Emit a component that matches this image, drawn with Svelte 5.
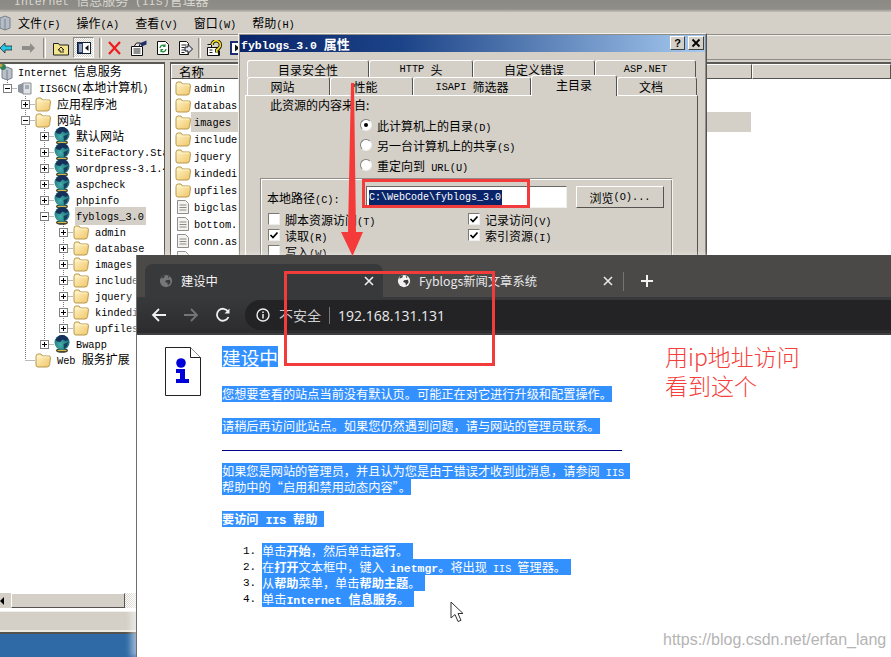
<script>
	// MMC tree: level decides the indent, exp is the +/- box
	const tree = [
		{ label: 'Internet 信息服务', level: 0, icon: 'root' },
		{ label: 'IIS6CN(本地计算机)', level: 1, exp: '-', icon: 'server' },
		{ label: '应用程序池', level: 2, exp: '+', icon: 'folder' },
		{ label: '网站', level: 2, exp: '-', icon: 'folder' },
		{ label: '默认网站', level: 3, exp: '+', icon: 'globe' },
		{ label: 'SiteFactory.Sta', level: 3, exp: '+', icon: 'globe' },
		{ label: 'wordpress-3.1.4', level: 3, exp: '+', icon: 'globe' },
		{ label: 'aspcheck', level: 3, exp: '+', icon: 'globe' },
		{ label: 'phpinfo', level: 3, exp: '+', icon: 'globe' },
		{ label: 'fyblogs_3.0', level: 3, exp: '-', icon: 'globe', selected: true },
		{ label: 'admin', level: 4, exp: '+', icon: 'folder' },
		{ label: 'database', level: 4, exp: '+', icon: 'folder' },
		{ label: 'images', level: 4, exp: '+', icon: 'folder' },
		{ label: 'include', level: 4, exp: '+', icon: 'folder' },
		{ label: 'jquery', level: 4, exp: '+', icon: 'folder' },
		{ label: 'kindedi', level: 4, exp: '+', icon: 'folder' },
		{ label: 'upfiles', level: 4, exp: '+', icon: 'folder' },
		{ label: 'Bwapp', level: 3, exp: '+', icon: 'globe' },
		{ label: 'Web 服务扩展', level: 2, icon: 'folder' },
	];
	const indent = [0, 3, 21, 40, 59];

	const files = [
		{ name: 'admin', icon: 'folder' },
		{ name: 'databas', icon: 'folder' },
		{ name: 'images', icon: 'folder', selected: true },
		{ name: 'include', icon: 'folder' },
		{ name: 'jquery', icon: 'folder' },
		{ name: 'kindedi', icon: 'folder' },
		{ name: 'upfiles', icon: 'folder' },
		{ name: 'bigclas', icon: 'file' },
		{ name: 'bottom.', icon: 'file' },
		{ name: 'conn.as', icon: 'file' },
		{ name: 'css.as', icon: 'file' },
	];

	const menus = ['文件(F)', '操作(A)', '查看(V)', '窗口(W)', '帮助(H)'];

	const steps = [
		[['单击'], ['开始', 1], ['，然后单击'], ['运行', 1], ['。']],
		[['在'], ['打开', 1], ['文本框中，键入 '], ['inetmgr', 1], ['。将出现 IIS 管理器。']],
		[['从'], ['帮助', 1], ['菜单，单击'], ['帮助主题', 1], ['。']],
		[['单击'], ['Internet 信息服务', 1], ['。']],
	];

	// SimSun-style half width latin: split so ascii runs get the mono face
	const split = (s) => s.match(/[\x00-\x7f]+|[^\x00-\x7f]+/g);
	const isAscii = (s) => s.charCodeAt(0) < 128;
	const y = (i) => 72 + i * 16;
	const cx = (level) => indent[level] + 4.5;
</script>

{#snippet txt(s)}{#each split(s) as p}{#if isAscii(p)}<span class="a">{p}</span>{:else}{p}{/if}{/each}{/snippet}

{#snippet icon(name)}
	{#if name === 'folder'}
		<svg class="ic" viewBox="0 0 16 16">
			<path d="M1 4.500V13q0 2 2 2h9q2.200 0 2.600-2.500L15.500 5.500q0-1.500-1.500-1.500H7.500L6 2H3Q1 2 1 4.500Z" fill="url(#fold)" stroke="#b7994e" />
			<path d="M2 5h12" stroke="#fff4c8" />
		</svg>
	{:else if name === 'globe'}
		<svg class="ic globe" viewBox="0 0 16 18">
			<ellipse cx="8" cy="15.500" rx="6" ry="2.300" fill="#3a3a2a" />
			<path d="M3.500 15.500h9" stroke="#d8b848" stroke-width="1.200" />
			<circle cx="8" cy="7.500" r="7.500" fill="url(#globe)" />
			<path d="M1.500 5Q4 0 8 0q4.500 0 6.500 4.500L11.500 6 8.500 4.500 6 7 3.500 6.500Z" fill="#17305a" />
			<path d="M9.500 9l4.500-1.500-1 4-3 2.500Z" fill="#17405f" />
		</svg>
	{:else if name === 'file'}
		<svg class="ic" viewBox="0 0 16 16">
			<path d="M2.500 1.500h8l3 3v10h-11Z" fill="#f4f3ee" stroke="#8f8f8f" />
			<path d="M4.500 6h7M4.500 8.500h7M4.500 11h7" stroke="#8a8a8a" />
		</svg>
	{:else if name === 'server'}
		<svg class="ic" viewBox="0 0 16 16">
			<path d="M1 5l5-2v11l-5-2Z" fill="#8d96a0" />
			<path d="M6 3h8v11H6Z" fill="#dfe3e6" stroke="#8a8f94" />
			<path d="M8 6h4M8 8h4" stroke="#6b7580" />
		</svg>
	{:else}
		<svg class="ic small" viewBox="0 0 14 16">
			<path d="M2 5l5-2 5 2v9l-5 2-5-2Z" fill="#b9c0c8" stroke="#78808a" />
			<path d="M7 6v10" stroke="#78808a" />
			<circle cx="3" cy="3" r="3" fill="#2f7f5f" />
			<circle cx="1" cy="1.500" r="1.500" fill="#c8a030" />
		</svg>
	{/if}
{/snippet}

{#snippet tabGlobe(color)}
	<svg class="tab-globe" viewBox="0 0 16 16">
		<circle cx="8" cy="8" r="7" fill={color} />
		<path d="M2.500 5.500 6 4l1-2.500L3.800 2.500ZM8 7l4.500-.5.8 3-3 3.500-.8-3L7 9ZM10 1.800l2 2-1.500.8Z" fill="#3a3a3c" />
	</svg>
{/snippet}

{#snippet closeX(color)}
	<svg class="tab-x" viewBox="0 0 10 10">
		<path d="M1 1l8 8M9 1l-8 8" stroke={color} stroke-width="1.600" />
	</svg>
{/snippet}

{#snippet check(label, on)}
	<div class="check">
		<span class="box">
			{#if on}
				<svg viewBox="0 0 10 10"><path d="M1.500 5l2.500 2.500 4.500-5" fill="none" stroke="#000" stroke-width="1.700" /></svg>
			{/if}
		</span>
		<span>{@render txt(label)}</span>
	</div>
{/snippet}

{#snippet radio(label, on)}
	<div class="radio">
		<span class="dot" class:on></span>
		<span>{@render txt(label)}</span>
	</div>
{/snippet}

<svg class="defs" aria-hidden="true">
	<defs>
		<linearGradient id="fold" x1="0" y1="0" x2="1" y2="1">
			<stop offset="0" stop-color="#fff6cc" />
			<stop offset="1" stop-color="#f0c566" />
		</linearGradient>
		<radialGradient id="globe" cx="0.400" cy="0.650" r="0.750">
			<stop offset="0" stop-color="#47b0a8" />
			<stop offset="1" stop-color="#0c5a70" />
		</radialGradient>
	</defs>
</svg>

<div class="screen">
	<!-- IIS manager window -->
	<div class="mmc">
		<div class="mmc-title">{@render txt('Internet 信息服务 (IIS)管理器')}</div>
		<div class="menubar">
			<svg class="menu-icon" viewBox="0 0 11 16">
				<path d="M0 3l5-2 5 2v10l-5 2-5-2Z" fill="#b4bcc6" stroke="#77808c" />
				<path d="M5 4v11" stroke="#77808c" />
			</svg>
			{#each menus as m}
				<span class="menu-item">{@render txt(m)}</span>
			{/each}
		</div>
		<div class="tools">
			<div class="tool-group">
				<svg class="t12" viewBox="0 0 12 14"><path d="M0 7l5-5v3h7v4H5v3Z" fill="#27c6e6" stroke="#1a1a1a" stroke-width=".7" /></svg>
				<svg class="t13" viewBox="0 0 13 14"><path d="M13 7L8 2v3H0v4h8v3Z" fill="#8f8d88" /></svg>
			</div>
			<span class="sep first"></span>
			<div class="tool-group near">
				<svg class="t16" viewBox="0 0 16 16">
					<path d="M.5 3.500h5l1 1.500h9v10H.5Z" fill="#f4e58a" stroke="#222" />
					<path d="M8 7L5 10h2v2h4M8 7l3 3H9" fill="none" stroke="#222" />
				</svg>
				<span class="pressed">
					<svg class="t14" viewBox="0 0 14 14">
						<rect x=".5" y="1.500" width="13" height="11" fill="#fff" stroke="#10203c" />
						<rect x="1" y="2" width="5" height="10" fill="#27406f" />
						<path d="M2 4h3M2 6h3M2 8h3M2 10h3" stroke="#fff" />
						<path d="M11.500 4L8 7l3.500 3Z" fill="#111" />
					</svg>
				</span>
			</div>
			<span class="sep"></span>
			<div class="tool-group">
				<svg class="t13" viewBox="0 0 13 14"><path d="M1 1l11 12M12 1L1 13" stroke="#ee1c1c" stroke-width="2.200" /></svg>
				<svg class="t16" viewBox="0 0 16 16">
					<path d="M.5 6.500h11v9H.5Z" fill="#fff" stroke="#111" />
					<path d="M2.500 9h7M2.500 11h7M2.500 13h7" stroke="#222" />
					<path d="M3 6.500l2.500-3.500h4l-1.500 3.500Z" fill="#e8e8e8" stroke="#111" />
					<path d="M9.500 3L15.500 .5v4l-5 2Z" fill="#1b2f6e" />
				</svg>
				<svg class="t12" viewBox="0 0 12 16">
					<path d="M.5 1.500h8l3 3v10H.5Z" fill="#fff" stroke="#111" />
					<path d="M3 8a3 3 0 0 1 5-2M9 9a3 3 0 0 1-5 2" fill="none" stroke="#1e8a3a" stroke-width="1.300" />
					<path d="M8.500 3.500v3.500H5.500ZM3.500 12.500V9h3Z" fill="#1e8a3a" />
				</svg>
				<svg class="t14" viewBox="0 0 14 16">
					<path d="M.5 1.500h7l2 2v11H.5Z" fill="#fff" stroke="#111" />
					<path d="M2.500 5h5M2.500 7.500h3M2.500 10h3M2.500 12.500h3" stroke="#222" />
					<path d="M6 7h3V4.500L13.500 9 9 13.500V11H6Z" fill="#dfe5f0" stroke="#111" />
				</svg>
			</div>
			<span class="sep"></span>
			<div class="tool-group wide">
				<svg class="t16" viewBox="0 0 16 16">
					<path d="M.5 4.500h4v11h8v-5" fill="#fff" stroke="#111" />
					<path d="M.5 7.500h11v8H.5Z" fill="#fff" stroke="#111" />
					<path d="M2.500 10h3M2.500 12.500h3" stroke="#222" />
					<path d="M5 5a4.200 4.200 0 1 1 6.500 3.500L9.800 10v2.500" fill="none" stroke="#111" stroke-width="3.400" />
					<path d="M5 5a4.200 4.200 0 1 1 6.500 3.500L9.800 10v2.500" fill="none" stroke="#f4e020" stroke-width="1.700" />
				</svg>
				<svg class="t14" viewBox="0 0 14 16">
					<rect x="1" y="2" width="12" height="12" fill="#fff" stroke="#1b2f6e" stroke-width="2" />
					<path d="M5 4.500L9.500 8 5 11.500Z" fill="#111" />
				</svg>
			</div>
		</div>
		<div class="panes">
			<div class="tree-pane">
				<div class="tree">
					<svg class="guides" viewBox="0 64 165 400">
						<path d="M7.500 80V88M25.500 96V360M44.500 128V344M63.500 224V328" class="guide" />
						{#each tree as r, i}
							{#if r.level > 0}
								<path d="M{cx(r.level)} {y(i) + 0.5}H{indent[r.level] + 14}" class="guide" />
							{/if}
						{/each}
					</svg>
					{#each tree as r}
						<div class="row" class:top={r.level === 0} style:padding-left="{indent[r.level]}px">
							{#if r.level > 0}
								<span class="exp" class:blank={!r.exp}>{#if r.exp}<i></i>{#if r.exp === '+'}<u></u>{/if}{/if}</span>
							{/if}
							{@render icon(r.icon)}
							<span class="label" class:selected={r.selected}>{@render txt(r.label)}</span>
						</div>
					{/each}
				</div>
				<div class="hscroll">
					<span class="sb-btn"></span>
					<span class="sb-thumb"></span>
					<span class="sb-track"></span>
				</div>
			</div>
			<div class="list-pane">
				<div class="list-head">
					<span class="col name">名称</span>
					<span class="col rest"></span>
				</div>
				{#each files as f}
					<div class="file">
						{@render icon(f.icon)}
						<span class="file-name" class:selected={f.selected}><span class="a">{f.name}</span></span>
					</div>
				{/each}
			</div>
		</div>
		<div class="status"></div>
	</div>

	<!-- properties dialog -->
	<div class="dialog">
		<div class="dlg-title">
			<span class="dlg-name">{@render txt('fyblogs_3.0 属性')}</span>
			<span class="cap-btn">?</span>
			<span class="cap-btn x">
				<svg viewBox="0 0 10 10"><path d="M1.500 1.500l7 7M8.500 1.500l-7 7" stroke="#000" stroke-width="1.800" /></svg>
			</span>
		</div>
		<div class="tabs back">
			<span class="tab w121">目录安全性</span>
			<span class="tab w103">{@render txt('HTTP 头')}</span>
			<span class="tab w120">自定义错误</span>
			<span class="tab w101">{@render txt('ASP.NET')}</span>
		</div>
		<div class="tabs front">
			<span class="tab w82 off">网站</span>
			<span class="tab w82 off">性能</span>
			<span class="tab w118">{@render txt('ISAPI 筛选器')}</span>
			<span class="tab w85 active">主目录</span>
			<span class="tab w80 off">文档</span>
		</div>
		<div class="page">
			<div class="src-title">此资源的内容来自:</div>
			<div class="radios">
				{@render radio('此计算机上的目录(D)', true)}
				{@render radio('另一台计算机上的共享(S)', false)}
				{@render radio('重定向到 URL(U)', false)}
			</div>
			<div class="group">
				<div class="path-row">
					<span class="path-label">{@render txt('本地路径(C):')}</span>
					<span class="path-input"><span class="path-sel">C:\WebCode\fyblogs_3.0</span></span>
					<span class="browse">{@render txt('浏览(O)...')}</span>
				</div>
				<div class="checks">
					<div class="check-col">
						{@render check('脚本资源访问(T)', false)}
						{@render check('读取(R)', true)}
						{@render check('写入(W)', false)}
					</div>
					<div class="check-col">
						{@render check('记录访问(V)', true)}
						{@render check('索引资源(I)', true)}
					</div>
				</div>
			</div>
		</div>
	</div>

	<!-- chrome window -->
	<div class="browser">
		<div class="strip">
			<div class="btab active">
				{@render tabGlobe('#77777a')}
				<span class="btab-text">建设中</span>
				{@render closeX('#f0f0f0')}
			</div>
			<div class="btab">
				{@render tabGlobe('#f2f2f2')}
				<span class="btab-text">Fyblogs新闻文章系统</span>
				{@render closeX('#e8e8e8')}
			</div>
			<span class="strip-sep"></span>
			<svg class="plus" viewBox="0 0 12 12"><path d="M6 0v12M0 6h12" stroke="#f2f2f2" stroke-width="2" /></svg>
		</div>
		<div class="nav">
			<span class="nav-btn">
				<svg viewBox="0 0 16 16"><path d="M15 8H2M8 2L2 8l6 6" fill="none" stroke="#f0f0f0" stroke-width="1.800" /></svg>
			</span>
			<span class="nav-btn">
				<svg viewBox="0 0 16 16"><path d="M1 8h13M8 2l6 6-6 6" fill="none" stroke="#757577" stroke-width="1.800" /></svg>
			</span>
			<span class="nav-btn">
				<svg viewBox="0 0 16 16"><path d="M13.500 10a6 6 0 1 1-.5-5.500" fill="none" stroke="#f0f0f0" stroke-width="1.800" /><path d="M14.500 1.500v5h-5Z" fill="#f0f0f0" /></svg>
			</span>
			<div class="omnibox">
				<svg class="info" viewBox="0 0 14 14">
					<circle cx="7" cy="7" r="6" fill="none" stroke="#eee" stroke-width="1.400" />
					<path d="M7 6v4.500M7 3.500v1.400" stroke="#eee" stroke-width="1.500" />
				</svg>
				<span class="insecure">不安全</span>
				<span class="omni-sep"></span>
				<span class="url">192.168.131.131</span>
			</div>
		</div>
		<div class="content">
			<svg class="doc-icon" viewBox="0 0 36 49">
				<path d="M.5.5h25l10 10v38H.5Z" fill="#fff" stroke="#222" />
				<path d="M25.500.5v10h10" fill="#fff" stroke="#222" />
				<circle cx="16" cy="16" r="4.800" fill="#0000d8" />
				<path d="M11 22h9v10h4v4H11v-4h4v-6h-4Z" fill="#0000d8" />
			</svg>
			<div class="copy">
				<h1><span class="sel big">建设中 </span></h1>
				<p><span class="sel">您想要查看的站点当前没有默认页。可能正在对它进行升级和配置操作。</span></p>
				<p><span class="sel">请稍后再访问此站点。如果您仍然遇到问题，请与网站的管理员联系。</span></p>
				<hr />
				<p class="tight">
					<span class="sel line">{@render txt('如果您是网站的管理员，并且认为您是由于错误才收到此消息，请参阅 IIS ')}</span>
					<span class="sel line">帮助中的“启用和禁用动态内容”。</span>
				</p>
				<p><span class="sel"><b>{@render txt('要访问 IIS 帮助 ')}</b></span></p>
				<ol>
					{#each steps as step, i}
						<li>
							<span class="num a">{i + 1}.</span>
							<span class="sel">{#each step as [t, bold]}{#if bold}<b>{@render txt(t)}</b>{:else}{@render txt(t)}{/if}{/each}</span>
						</li>
					{/each}
				</ol>
			</div>
		</div>
	</div>

	<!-- red annotations drawn over the screenshots -->
	<svg class="arrow" viewBox="0 0 30 180">
		<path d="M12 0h3l2 149h7L13.500 173 2 149h7Z" fill="#f53a3a" />
	</svg>
	<div class="mark mark-path"></div>
	<div class="mark mark-addr"></div>
	<div class="note">用ip地址访问<br />看到这个</div>
	<svg class="cursor" viewBox="0 0 14 22">
		<path d="M1 1v16l4-3.500 3 7 3-1.200-3-6.800h5Z" fill="#fff" stroke="#333" />
	</svg>
	<div class="watermark">https://blog.csdn.net/erfan_lang</div>
</div>

<style>
	:global(body) {
		margin: 0;
		background: #2f6aa6;
	}

	.defs {
		position: absolute;
		width: 0;
		height: 0;
	}

	.screen {
		position: relative;
		width: 891px;
		height: 657px;
		overflow: hidden;
		background: #2f6aa6;
		font-family: "Noto Sans CJK SC", sans-serif;
		font-size: 12px;
		color: #000;
	}

	.a {
		font-family: "Liberation Mono", monospace;
		font-size: 10.3px;
		white-space: pre;
	}

	/* ---- MMC window ---- */
	.mmc {
		position: absolute;
		left: 0;
		top: 0;
		width: 891px;
		height: 634px;
		display: flex;
		flex-direction: column;
		background: #d4d0c8;
		border-bottom: 2px solid #55534f;
		box-sizing: border-box;
	}

	.mmc-title {
		height: 12px;
		flex: none;
		padding-left: 14px;
		font-size: 13px;
		line-height: 0;
		background: linear-gradient(180deg, #8c8a84 0%, #8f8d87 75%, #c4c1b9 100%);
		color: #d8d6d0;
		white-space: pre;
		overflow: hidden;
	}

	.mmc-title .a {
		font-size: 11.500px;
	}

	.menubar {
		height: 23px;
		flex: none;
		display: flex;
		align-items: center;
		gap: 16px;
		padding-bottom: 1px;
		border-bottom: 1px solid #8f8d87;
		box-sizing: border-box;
	}

	.menu-icon {
		width: 11px;
		height: 16px;
		margin-right: -9px;
	}

	.tools {
		height: 25px;
		flex: none;
		display: flex;
		align-items: center;
		border-top: 1px solid #f2f0ea;
		border-bottom: 1px solid #8f8d87;
		box-sizing: border-box;
	}

	.tool-group {
		display: flex;
		align-items: center;
		gap: 10px;
	}

	.tool-group.near {
		gap: 4px;
	}

	.tool-group.wide {
		gap: 7px;
	}

	.sep {
		width: 1px;
		height: 20px;
		margin: 0 6px 0 5px;
		border-left: 1px solid #8f8d87;
		border-right: 1px solid #fff;
	}

	.sep.first {
		margin: 0 7px 0 8px;
	}

	.t12 { width: 12px; height: 16px; }
	.t13 { width: 13px; height: 14px; }
	.t14 { width: 14px; height: 16px; }
	.t16 { width: 16px; height: 16px; }

	.pressed {
		width: 21px;
		height: 21px;
		display: flex;
		align-items: center;
		justify-content: center;
		box-sizing: border-box;
		border: 1px solid;
		border-color: #8f8d87 #fff #fff #8f8d87;
		background: repeating-conic-gradient(#fff 0 25%, #d4d0c8 0 50%) 0 0 / 2px 2px;
	}

	.panes {
		flex: 1;
		display: flex;
		gap: 5px;
		min-height: 0;
		margin-top: 2px;
	}

	.tree-pane {
		width: 165px;
		flex: none;
		display: flex;
		flex-direction: column;
		background: #fff;
		border-top: 2px solid #5c5a56;
		border-right: 1px solid #5c5a56;
		border-bottom: 1px solid #fff;
		box-sizing: border-box;
	}

	.tree {
		position: relative;
		flex: 1;
		overflow: hidden;
	}

	.guides {
		position: absolute;
		left: 0;
		top: 0;
		width: 165px;
		height: 400px;
	}

	.guide {
		fill: none;
		stroke: #777;
		stroke-dasharray: 1 1;
	}

	.row {
		position: relative;
		display: flex;
		align-items: center;
		height: 16px;
	}

	.exp {
		position: relative;
		width: 9px;
		height: 9px;
		flex: none;
		margin-right: 5px;
		box-sizing: border-box;
		border: 1px solid #808080;
		background: #fff;
	}

	.exp.blank {
		visibility: hidden;
	}

	.exp i {
		position: absolute;
		left: 1px;
		top: 3px;
		width: 5px;
		height: 1px;
		background: #000;
	}

	.exp u {
		position: absolute;
		left: 3px;
		top: 1px;
		width: 1px;
		height: 5px;
		background: #000;
	}

	.ic {
		width: 16px;
		height: 16px;
		flex: none;
	}

	.ic.small {
		width: 14px;
	}

	.ic.globe {
		height: 18px;
		margin: -1px 0;
		overflow: visible;
	}

	.label {
		margin-left: 5px;
		padding: 0 2px 0 1px;
		line-height: 16px;
		white-space: pre;
	}

	.row.top .label {
		margin-left: 3px;
	}

	.selected {
		background: #d4d0c8;
	}

	.hscroll {
		height: 15px;
		flex: none;
		display: flex;
		margin-bottom: 2px;
		background: #d4d0c8;
	}

	.sb-btn {
		width: 0;
		height: 0;
		margin: 4px 7px 0 0;
		border-top: 4px solid transparent;
		border-bottom: 4px solid transparent;
		border-right: 4px solid #000;
	}

	.sb-thumb {
		width: 114px;
		box-sizing: border-box;
		border: 1px solid;
		border-color: #fff #55534f #55534f #fff;
	}

	.sb-track {
		flex: 1;
		background: repeating-conic-gradient(#fff 0 25%, #d4d0c8 0 50%) 0 0 / 2px 2px;
	}

	.list-pane {
		flex: 1;
		min-width: 0;
		background: #fff;
		border-top: 2px solid #5c5a56;
		border-left: 1px solid #5c5a56;
	}

	.list-head {
		display: flex;
		height: 15px;
	}

	.col {
		display: flex;
		align-items: center;
		padding-left: 7px;
		box-sizing: border-box;
		background: #d4d0c8;
		border: 1px solid;
		border-color: #fff #55534f #55534f #fff;
	}

	.col.name {
		width: 581px;
		flex: none;
		font-size: 12.500px;
	}

	.col.rest {
		flex: 1;
	}

	.file {
		display: flex;
		align-items: center;
		height: 17px;
		padding-left: 4px;
	}

	.file-name {
		width: 560px;
		padding-left: 3px;
		line-height: 17px;
		box-sizing: border-box;
	}

	.status {
		height: 21px;
		flex: none;
		border-top: 1px solid #f2f0ea;
		border-bottom: 2px solid #ece9e1;
		box-sizing: border-box;
	}

	/* ---- properties dialog ---- */
	.dialog {
		position: absolute;
		left: 238px;
		top: 33px;
		width: 469px;
		height: 260px;
		box-sizing: border-box;
		background: #d4d0c8;
		border: 1px solid;
		border-color: #f2f0ea #55534f #55534f #f2f0ea;
		outline: 1px solid #8f8d87;
		outline-offset: -2px;
	}

	.dlg-title {
		height: 18px;
		display: flex;
		align-items: center;
		gap: 3px;
		padding-right: 2px;
		background: linear-gradient(90deg, #0a246a 0%, #1d4488 35%, #a6caf0 100%);
		color: #fff;
		font-size: 13px;
		font-weight: 700;
	}

	.dlg-name {
		flex: 1;
		padding-left: 2px;
		white-space: pre;
	}

	.dlg-name :global(.a) {
		font-size: 11.500px;
	}

	.cap-btn {
		width: 15px;
		height: 14px;
		display: flex;
		align-items: center;
		justify-content: center;
		box-sizing: border-box;
		background: #d4d0c8;
		color: #000;
		font-family: "Liberation Sans", sans-serif;
		font-size: 11px;
		font-weight: 700;
		border: 1px solid;
		border-color: #fff #404040 #404040 #fff;
	}

	.cap-btn.x {
		width: 16px;
	}

	.cap-btn svg {
		width: 10px;
		height: 10px;
	}

	.tabs {
		display: flex;
		margin-left: 8px;
	}

	.tabs.back {
		height: 17px;
		margin-top: 8px;
	}

	.tabs.front {
		height: 18px;
	}

	.tab {
		display: flex;
		align-items: center;
		justify-content: center;
		box-sizing: border-box;
		border: 1px solid;
		border-bottom: 0;
		border-color: #fff #55534f transparent #fff;
		border-radius: 3px 3px 0 0;
		white-space: pre;
	}

	/* these labels sit left of centre in the original */
	.tab.off {
		padding-right: 12px;
	}

	.tab.active {
		position: relative;
		z-index: 1;
		height: 21px;
		margin-top: -2px;
		padding-bottom: 3px;
		background: #d4d0c8;
	}

	.w80 { width: 80px; }
	.w82 { width: 83px; }
	.w85 { width: 86px; }
	.w101 { width: 101px; }
	.w103 { width: 104px; }
	.w118 { width: 118px; }
	.w120 { width: 122px; }
	.w121 { width: 122px; }

	.page {
		width: 453px;
		height: 210px;
		margin-left: 6px;
		padding-top: 1px;
		box-sizing: border-box;
		border: 1px solid;
		border-color: #fff #55534f #55534f #fff;
	}

	.src-title {
		height: 16px;
		line-height: 16px;
		margin-left: 24px;
	}

	.radios {
		margin: 2px 0 3px 114px;
	}

	.radio {
		display: flex;
		align-items: center;
		gap: 5px;
		height: 20px;
		white-space: pre;
	}

	.dot {
		position: relative;
		width: 12px;
		height: 12px;
		box-sizing: border-box;
		border-radius: 50%;
		background: #fff;
		border: 1px solid;
		border-color: #808080 #eee #eee #808080;
	}

	.dot.on::after {
		content: "";
		position: absolute;
		left: 3px;
		top: 3px;
		width: 4px;
		height: 4px;
		border-radius: 50%;
		background: #000;
	}

	.group {
		width: 413px;
		height: 110px;
		margin-left: 14px;
		padding: 7px 0 0 6px;
		box-sizing: border-box;
		border: 1px solid;
		border-color: #8f8d87 #f6f4ee #f6f4ee #8f8d87;
		box-shadow: 1px 1px 0 #fff inset, -1px 0 0 #8f8d87 inset;
	}

	.path-row {
		display: flex;
		align-items: center;
		height: 22px;
	}

	.path-label {
		width: 99px;
		flex: none;
		white-space: pre;
	}

	.path-input {
		width: 201px;
		height: 22px;
		flex: none;
		display: flex;
		align-items: center;
		padding-left: 2px;
		box-sizing: border-box;
		background: #fff;
		border: 1px solid;
		border-color: #6a6862 #f2f0ea #f2f0ea #6a6862;
	}

	.path-sel {
		height: 15px;
		line-height: 15px;
		padding-right: 1px;
		background: #0a246a;
		color: #fff;
		font-family: "Liberation Mono", monospace;
		font-size: 10px;
		white-space: pre;
	}

	.browse {
		width: 88px;
		height: 22px;
		margin-left: 9px;
		display: flex;
		align-items: center;
		justify-content: center;
		box-sizing: border-box;
		white-space: pre;
		border: 1px solid;
		border-color: #fff #55534f #55534f #fff;
	}

	.checks {
		display: flex;
		margin-top: 3px;
	}

	.check-col {
		width: 200px;
	}

	.check {
		display: flex;
		align-items: center;
		gap: 5px;
		height: 16px;
		padding-left: 1px;
		white-space: pre;
	}

	.box {
		width: 12px;
		height: 12px;
		box-sizing: border-box;
		background: #fff;
		border: 1px solid;
		border-color: #7a7872 #eee #eee #7a7872;
	}

	.box svg {
		display: block;
		width: 10px;
		height: 10px;
	}

	/* ---- browser ---- */
	.browser {
		position: absolute;
		left: 136px;
		top: 255px;
		width: 755px;
		height: 402px;
		display: flex;
		flex-direction: column;
		background: #fff;
		border-left: 1px solid #6f6f6f;
		box-sizing: border-box;
		box-shadow: -5px 0 6px rgba(255, 255, 255, 0.5);
		font-family: "Open Sans", "Noto Sans CJK SC", sans-serif;
	}

	.strip {
		height: 42px;
		flex: none;
		display: flex;
		align-items: flex-end;
		padding-left: 8px;
		background: #4a4948;
	}

	.btab {
		display: flex;
		align-items: center;
		height: 33px;
		padding: 0 10px 0 14px;
		box-sizing: border-box;
		width: 240px;
		color: #e8e8e8;
		font-family: "Noto Sans CJK SC", sans-serif;
		font-size: 12.300px;
	}

	.btab.active {
		width: 238px;
		padding-right: 9px;
		background: #38393b;
		border-radius: 8px 8px 0 0;
		color: #f4f4f4;
	}

	.tab-globe {
		width: 14px;
		height: 14px;
		flex: none;
	}

	.btab-text {
		flex: 1;
		margin-left: 8px;
	}

	.tab-x {
		width: 10px;
		height: 10px;
		flex: none;
	}

	.strip-sep {
		width: 1px;
		height: 19px;
		margin-bottom: 6px;
		background: #757472;
	}

	.plus {
		width: 12px;
		height: 12px;
		margin: 0 0 10px 17px;
	}

	.nav {
		height: 38px;
		flex: none;
		display: flex;
		align-items: center;
		padding-left: 6px;
		background: linear-gradient(180deg, #38393b 0%, #2c2c2e 100%);
		border-bottom: 2px solid #3f3f41;
		box-sizing: border-box;
	}

	.nav-btn {
		width: 32px;
		height: 28px;
		flex: none;
		display: flex;
		align-items: center;
		justify-content: center;
	}

	.nav-btn svg {
		width: 16px;
		height: 16px;
	}

	.omnibox {
		flex: 1;
		height: 30px;
		display: flex;
		align-items: center;
		margin-left: 6px;
		padding-left: 11px;
		background: #232325;
		border-radius: 15px 0 0 15px;
	}

	.info {
		width: 14px;
		height: 14px;
	}

	.insecure {
		margin-left: 9px;
		color: #d0d0d0;
		font-family: "Noto Sans CJK SC", sans-serif;
		font-size: 14px;
	}

	.omni-sep {
		width: 1px;
		height: 17px;
		margin: 0 8px;
		background: #777;
	}

	.url {
		color: #ececec;
		font-family: "Open Sans", sans-serif;
		font-size: 14px;
	}

	.content {
		flex: 1;
		display: flex;
		align-items: flex-start;
		gap: 21px;
		padding: 11px 0 0 28px;
		font-family: "Noto Sans CJK SC", sans-serif;
		font-size: 12.200px;
	}

	.doc-icon {
		width: 36px;
		height: 49px;
		flex: none;
		margin-top: 1px;
	}

	.copy {
		width: 400px;
	}

	.copy h1 {
		margin: 0 0 19px;
		height: 21px;
		font-size: 18.700px;
		font-weight: 400;
		line-height: 21px;
	}

	.copy p {
		margin: 0 0 16px;
		line-height: 16px;
	}

	.sel {
		display: inline-block;
		height: 16px;
		line-height: 16px;
		background: #3390ff;
		color: #fff;
		white-space: pre;
	}

	.sel.big {
		height: 21px;
		line-height: 21px;
	}

	.sel.line {
		display: block;
		width: fit-content;
	}

	.sel :global(.a) {
		font-size: 10.100px;
	}

	.sel b :global(.a) {
		font-size: 11.500px;
	}

	.copy hr {
		height: 1px;
		margin: 0 0 12px;
		border: 0;
		background: #00008b;
	}

	.copy ol {
		margin: 0;
		padding: 0;
		list-style: none;
	}

	.copy li {
		display: flex;
		height: 16px;
		line-height: 16px;
	}

	.copy li .sel {
		padding-right: 5px;
	}

	.num {
		width: 40px;
		padding-left: 21px;
		box-sizing: border-box;
		font-size: 11px;
	}

	/* ---- annotations ---- */
	.arrow {
		position: absolute;
		left: 339px;
		top: 83px;
		width: 30px;
		height: 180px;
	}

	.mark {
		position: absolute;
		box-sizing: border-box;
		border: 3px solid #f23b3b;
	}

	.mark-path {
		left: 362px;
		top: 179px;
		width: 168px;
		height: 29px;
	}

	.mark-addr {
		left: 284px;
		top: 271px;
		width: 211px;
		height: 95px;
	}

	.note {
		position: absolute;
		left: 665px;
		top: 342px;
		color: #f5403c;
		font-family: "Noto Sans CJK SC", sans-serif;
		font-size: 23px;
		font-weight: 300;
		line-height: 29px;
	}

	.cursor {
		position: absolute;
		left: 450px;
		top: 601px;
		width: 14px;
		height: 22px;
	}

	.watermark {
		position: absolute;
		left: 663px;
		top: 630px;
		color: #b4b4b4;
		font-family: "Liberation Sans", sans-serif;
		font-size: 16px;
		line-height: 20px;
	}
</style>
